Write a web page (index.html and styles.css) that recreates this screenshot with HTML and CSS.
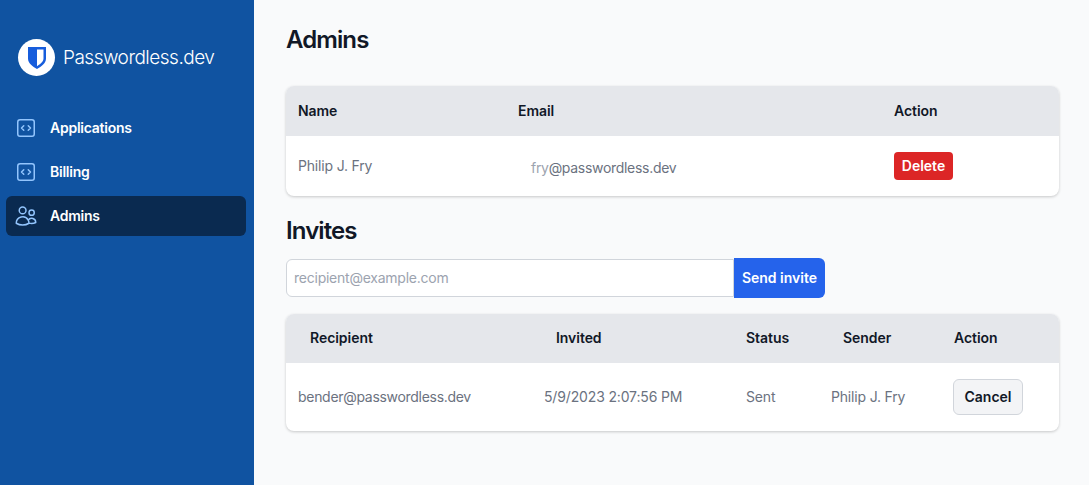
FILE: index.html
```html
<!DOCTYPE html>
<html lang="en">
<head>
<meta charset="utf-8">
<title>Admins</title>
<link rel="stylesheet" href="styles.css">
</head>
<body>
<div class="app">
  <aside class="sidebar">
    <div class="brand">
      <span class="brand-mark">
        <svg viewBox="0 0 20 24" width="20" height="24"><path fill="#175ddc" fill-rule="evenodd" d="M1 1h18v11.500c0 4.500-4.500 8-9 10.500-4.500-2.500-9-6-9-10.500z M10 3.500v16.700c2.500-1.500 6.500-4.300 6.500-7.700v-9z"/></svg>
      </span>
      <span class="brand-name">Passwordless.dev</span>
    </div>
    <nav class="nav">
      <a class="nav-item" href="#">
        <svg class="nav-icon" viewBox="0 0 24 24" fill="none" stroke-width="1.500" stroke-linecap="round" stroke-linejoin="round"><path d="M14.250 9.750L16.500 12l-2.250 2.250m-4.500 0L7.500 12l2.250-2.250M6 20.250h12A2.250 2.250 0 0020.250 18V6A2.250 2.250 0 0018 3.750H6A2.250 2.250 0 003.750 6v12A2.250 2.250 0 006 20.250z"/></svg>
        Applications
      </a>
      <a class="nav-item" href="#">
        <svg class="nav-icon" viewBox="0 0 24 24" fill="none" stroke-width="1.500" stroke-linecap="round" stroke-linejoin="round"><path d="M14.250 9.750L16.500 12l-2.250 2.250m-4.500 0L7.500 12l2.250-2.250M6 20.250h12A2.250 2.250 0 0020.250 18V6A2.250 2.250 0 0018 3.750H6A2.250 2.250 0 003.750 6v12A2.250 2.250 0 006 20.250z"/></svg>
        Billing
      </a>
      <a class="nav-item active" href="#">
        <svg class="nav-icon" viewBox="0 0 24 24" fill="none" stroke-width="1.500" stroke-linecap="round" stroke-linejoin="round"><path d="M15 19.128a9.380 9.380 0 002.625.372 9.337 9.337 0 004.121-.952 4.125 4.125 0 00-7.533-2.493M15 19.128v-.003c0-1.113-.285-2.160-.786-3.070M15 19.128v.106A12.318 12.318 0 018.624 21c-2.331 0-4.512-.645-6.374-1.766l-.001-.109a6.375 6.375 0 0111.964-3.070M12 6.375a3.375 3.375 0 11-6.750 0 3.375 3.375 0 016.750 0zm8.250 2.250a2.625 2.625 0 11-5.250 0 2.625 2.625 0 015.250 0z"/></svg>
        Admins
      </a>
    </nav>
  </aside>
  <main class="main">
    <h1 class="title">Admins</h1>
    <section class="card admins-card">
      <div class="grid admins-grid head">
        <div>Name</div>
        <div>Email</div>
        <div>Action</div>
      </div>
      <div class="grid admins-grid row">
        <div>Philip J. Fry</div>
        <div class="email addr"><span class="muted">fry</span>@passwordless.dev</div>
        <div><button class="btn danger">Delete</button></div>
      </div>
    </section>
    <h2 class="title invites-title">Invites</h2>
    <form class="invite-form">
      <input class="invite-input" type="email" placeholder="recipient@example.com">
      <button class="btn primary" type="button">Send invite</button>
    </form>
    <section class="card invites-card">
      <div class="grid invites-head head">
        <div>Recipient</div>
        <div>Invited</div>
        <div>Status</div>
        <div>Sender</div>
        <div>Action</div>
      </div>
      <div class="grid invites-row row">
        <div class="addr">bender@passwordless.dev</div>
        <div class="date">5/9/2023 2:07:56 PM</div>
        <div>Sent</div>
        <div>Philip J. Fry</div>
        <div><button class="btn secondary">Cancel</button></div>
      </div>
    </section>
  </main>
</div>
</body>
</html>
```
FILE: styles.css
```css
* { box-sizing: border-box; }
html, body { margin: 0; height: 100%; }
body {
  font-family: Inter, "Liberation Sans", sans-serif;
  font-size: 14px;
  color: #111827;
  background: #f9fafb;
  overflow: hidden;
}
.app { display: flex; height: 485px; }
.sidebar {
  width: 254px;
  flex: none;
  background: #1053a1;
  padding: 39px 8px 0 6px;
}
.brand { display: flex; align-items: center; gap: 8px; padding-left: 12px; height: 37px; }
.brand-mark {
  width: 37px;
  height: 37px;
  border-radius: 50%;
  background: #fff;
  display: flex;
  align-items: center;
  justify-content: center;
  flex: none;
}
.brand-name {
  font-family: Inter, sans-serif;
  font-size: 19px;
  font-weight: 300;
  color: #fff;
  letter-spacing: -0.5px;
}
.nav { display: flex; flex-direction: column; gap: 4px; margin-top: 32px; }
.nav-item {
  display: flex;
  align-items: center;
  gap: 12px;
  height: 40px;
  padding: 0 8px;
  border-radius: 6px;
  color: #fff;
  font-weight: 600;
  text-decoration: none;
  line-height: 20px;
  letter-spacing: -0.25px;
}
.nav-item.active { background: #0a2a50; }
.nav-icon { width: 24px; height: 24px; stroke: #93c5fd; flex: none; }
.main { flex: 1; padding: 24px 30px 0 32px; min-width: 0; }
.title { margin: 0; font-size: 24px; line-height: 32px; font-weight: 600; color: #111827; letter-spacing: -0.9px; }
.invites-title { margin-top: 19px; }
.card {
  background: #fff;
  border-radius: 8px;
  overflow: hidden;
  box-shadow: 0 1px 3px rgba(0, 0, 0, .2);
}
.admins-card { margin-top: 30px; }
.invites-card { margin-top: 16px; }
.grid { display: grid; align-items: center; }
.head {
  height: 50px;
  background: #e5e7eb;
  font-weight: 600;
  color: #111827;
  line-height: 20px;
  letter-spacing: -0.05px;
}
.row { color: #6b7280; line-height: 20px; letter-spacing: -0.18px; }
.addr { letter-spacing: -0.3px; }
.date { letter-spacing: -0.15px; }
.admins-grid { grid-template-columns: 220px 376px 1fr; padding-left: 12px; }
.admins-card .row { height: 60px; }
.email { padding: 4px 0 0 13px; }
.muted { color: #9ca3af; }
.invites-head { grid-template-columns: 246px 190px 97px 111px 1fr; padding: 0 0 2px 24px; height: 49px; }
.invites-row { grid-template-columns: 247px 201px 85px 122px 1fr; padding-left: 12px; height: 68px; }
.invites-row .date { margin-left: -1px; }
.btn {
  font-family: inherit;
  font-size: 14px;
  font-weight: 600;
  line-height: 20px;
  border: 0;
  display: block;
}
.danger { background: #dc2626; color: #fff; height: 28px; width: 59px; padding: 0; border-radius: 4px; }
.secondary {
  background: #f3f4f6;
  color: #111827;
  width: 70px;
  height: 36px;
  padding: 0;
  border: 1px solid #d1d5db;
  border-radius: 6px;
}
.invite-form { display: flex; align-items: center; margin-top: 11px; }
.invite-input {
  width: 448px;
  height: 38px;
  border: 1px solid #d1d5db;
  border-radius: 6px 0 0 6px;
  background: #fff;
  padding: 0 7px 2px;
  font-family: inherit;
  font-size: 14px;
  letter-spacing: -0.24px;
  outline: none;
}
.invite-input::placeholder { color: #9ca3af; opacity: 1; }
.primary { background: #2563eb; color: #fff; width: 91px; height: 40px; padding: 0; border-radius: 0 6px 6px 0; }
```
